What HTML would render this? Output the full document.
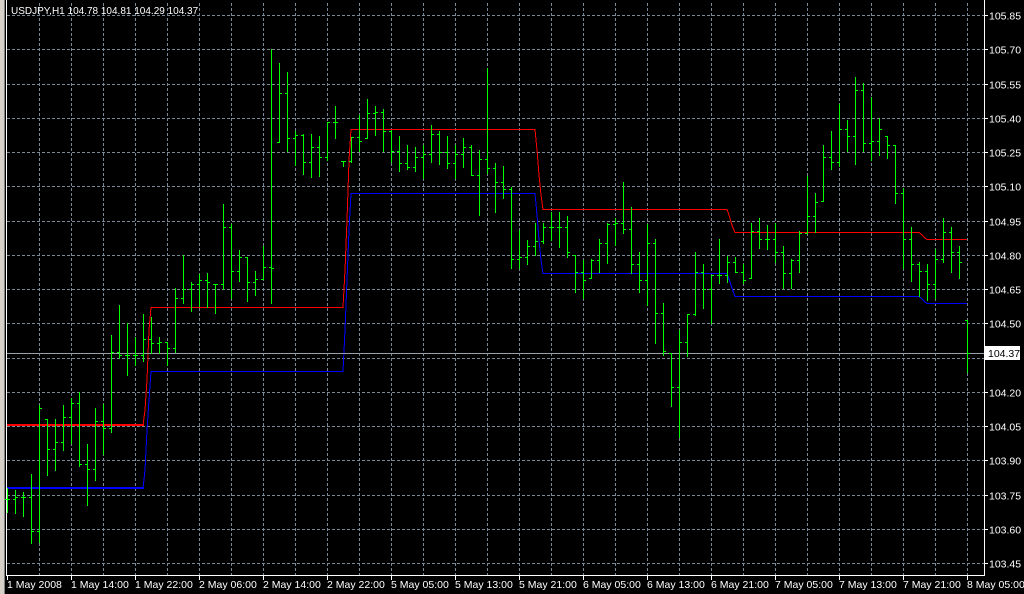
<!DOCTYPE html>
<html><head><meta charset="utf-8"><style>
html,body{margin:0;padding:0;background:#000;width:1024px;height:594px;overflow:hidden}
svg{display:block}
text{font-family:"Liberation Sans",sans-serif;font-size:10.5px;fill:#fff}
</style></head><body>
<svg id="c" width="1024" height="594" xmlns="http://www.w3.org/2000/svg">
<rect x="0" y="0" width="1024" height="594" fill="#000"/>
<rect x="0" y="0" width="4" height="594" fill="#d4d0c8"/>
<rect x="4" y="0" width="1" height="594" fill="#808080"/>
<rect x="6" y="0" width="1" height="576" fill="#fff"/>
<g id="grid" stroke="#7b8896" stroke-width="1" stroke-dasharray="3,2" shape-rendering="crispEdges"></g>
<g id="ind" fill="none" stroke-width="1" shape-rendering="crispEdges">
<polyline stroke="#ff0000" points="7,425.5 143,425.5 145,410 147,380 149,330 151,307.5 343,307.5 345,270 347,220 349,160 351,129.5 535,129.5 537,150 539,175 541,195 543,209.5 727,209.5 729,215 731,222 733,228 735,232.5 919,232.5 921,234 923,236 925,238 927,239.5 967,239.5"/>
<polyline stroke="#0000ff" points="7,488.5 143,488.5 145,470 147,430 149,400 151,371.5 343,371.5 345,330 347,280 349,230 351,193.5 535,193.5 537,215 539,240 541,260 543,273.5 727,273.5 729,279 731,285 733,291 735,296.5 919,296.5 921,298 923,300 925,302 927,303.5 967,303.5"/>
<rect x="7" y="424" width="137" height="2" fill="#ff0000" stroke="none"/>
<rect x="7" y="487" width="137" height="2" fill="#0000ff" stroke="none"/>
</g>
<line x1="7" y1="353.5" x2="984" y2="353.5" stroke="#9aa0a8" stroke-width="1" shape-rendering="crispEdges"/>
<g id="bars" stroke="#00ff00" stroke-width="1" shape-rendering="crispEdges"></g>
<rect x="984" y="0" width="1" height="576" fill="#fff"/>
<rect x="6" y="575" width="979" height="1" fill="#fff"/>
<g id="axis" stroke="#fff" shape-rendering="crispEdges"></g>
<g id="labels"></g>
<rect x="985" y="346" width="35" height="14" fill="#fff"/>
<text x="988" y="357" style="fill:#000">104.37</text>
<text x="11" y="14" style="font-size:10px">USDJPY,H1  104.78 104.81 104.29 104.37</text>
</svg>
<script>
var NS="http://www.w3.org/2000/svg";
function el(p,t,a,txt){var e=document.createElementNS(NS,t);for(var k in a)e.setAttribute(k,a[k]);if(txt)e.textContent=txt;document.getElementById(p).appendChild(e);}
for(var k=0;k<17;k++){var y=Math.round(15+34.25*k)+0.5;el("grid","line",{x1:7,y1:y,x2:984,y2:y});
 el("axis","line",{x1:985,y1:y,x2:988,y2:y});
 var p=(105.85-0.15*k).toFixed(2); if(k!=10) el("labels","text",{x:989,y:y+4},p);}
for(var k=0;k<30;k++){var x=39+32*k+0.5;el("grid","line",{x1:x,y1:3,x2:x,y2:575});}
var lab=["1 May 2008","1 May 14:00","1 May 22:00","2 May 06:00","2 May 14:00","2 May 22:00","5 May 05:00","5 May 13:00","5 May 21:00","6 May 05:00","6 May 13:00","6 May 21:00","7 May 05:00","7 May 13:00","7 May 21:00","8 May 05:00"];
for(var i=0;i<lab.length;i++){var x=7+64*i;el("axis","line",{x1:x+0.5,y1:576,x2:x+0.5,y2:580});el("labels","text",{x:x,y:588},lab[i]);}
var B=[[488,512,499],[490,513,497],[492,516,497],[474,543,531],[405,542,408],[419,475,449],[419,470,442],[405,450,417],[398,443,403],[392,466,464],
[444,505,469],[408,480,421],[404,454,428],[335,432,352],[305,358,355],[323,375,355],[337,365,355],[314,361,339],[317,353,343],[337,353,342],
[342,365,348],[288,352,298],[255,303,289],[282,311,284],[274,306,280],[273,307,282],[284,313,284],[204,289,227],[224,298,271],[250,281,257],
[257,301,282],[271,295,279],[246,279,267],[49,303,268],[63,142,93],[72,151,138],[131,165,135],[134,174,162],[134,177,147],[136,176,157],
[122,160,122],[106,138,122],[161,166,161],[137,162,137],[115,151,141],[99,138,113],[106,135,112],[109,151,131],[130,162,151],[136,171,163],
[145,169,167],[147,171,157],[145,178,154],[125,162,134],[131,164,152],[136,168,163],[145,178,154],[138,167,147],[145,175,175],[150,215,159],
[68,173,168],[163,212,182],[166,198,189],[187,268,259],[230,268,257],[240,264,246],[223,255,241],[223,243,227],[212,240,227],[212,247,227],
[216,257,252],[255,292,272],[260,298,280],[259,278,260],[239,272,243],[223,263,224],[218,245,223],[182,233,229],[207,273,264],[252,292,280],
[224,305,243],[239,343,313],[303,355,351],[353,406,387],[330,437,342],[314,356,314],[252,315,272],[264,308,289],[275,323,275],[239,283,275],
[256,282,262],[257,272,272],[264,283,280],[223,278,231],[218,248,239],[225,249,239],[223,262,252],[246,288,273],[259,288,260],[231,272,233],
[176,233,216],[193,232,202],[145,201,157],[131,169,162],[104,166,129],[120,151,136],[77,164,90],[83,151,143],[97,160,141],[118,155,129],
[136,158,145],[145,203,193],[188,268,239],[227,281,264],[262,296,271],[264,300,284],[249,298,259],[218,262,232],[227,272,252],[246,278,262],
[320,372,353]];
var prev=B[0][2];
for(var i=0;i<B.length;i++){var b=B[i],x=7+8*i+0.5;
 var o=Math.min(Math.max(prev,b[0]),b[1]);
 el("bars","line",{x1:x,y1:b[0],x2:x,y2:b[1]+1});
 el("bars","line",{x1:x-2.5,y1:o+0.5,x2:x,y2:o+0.5});
 el("bars","line",{x1:x,y1:b[2]+0.5,x2:x+2.5,y2:b[2]+0.5});
 prev=b[2];}
</script>
</body></html>
